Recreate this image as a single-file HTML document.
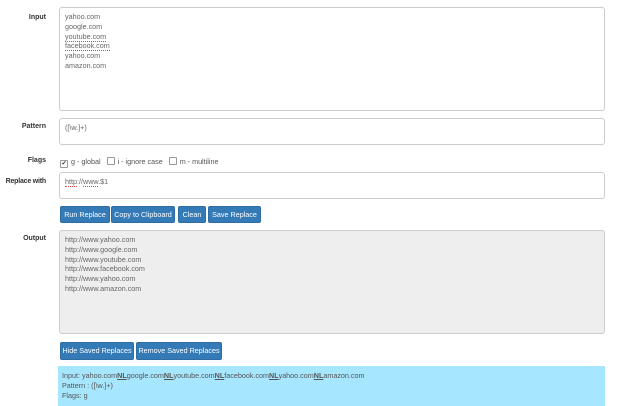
<!DOCTYPE html>
<html><head><style>
body{margin:0;width:640px;height:400px;overflow:hidden;background:#fff;font-family:"Liberation Sans",sans-serif;font-size:7px;color:#555;position:relative}
.lbl{position:absolute;right:594px;font-weight:bold;color:#333;font-size:7px}
.ta{position:absolute;left:59px;width:546px;border:1px solid #ccc;border-radius:3px;box-sizing:border-box;padding:4px 5px;line-height:9.8px;color:#666;font-size:7.2px}
.btn{position:absolute;height:17px;background:#337ab7;border:1px solid #2e6da4;border-radius:2px;color:#fff;box-sizing:border-box;line-height:15px;text-align:center;font-size:7.2px}
.u{border-bottom:1px dotted #d44}
.cb{display:inline-block;width:6px;height:6px;border:1px solid #999;border-radius:1px;vertical-align:-1px;margin-right:3px;background:#fff;font-size:6px;line-height:6px;text-align:center;color:#333}
</style></head><body>
<div class="lbl" style="top:14px">Input</div>
<div class="ta" style="top:7px;height:104px">yahoo.com<br>google.com<br><span class="u">youtube.com</span><br><span class="u">facebook.com</span><br>yahoo.com<br>amazon.com</div>
<div class="lbl" style="top:123px">Pattern</div>
<div class="ta" style="top:118px;height:27px">([\w.]+)</div>
<div class="lbl" style="top:157px">Flags</div>
<div style="position:absolute;left:60px;top:157px;color:#555;font-size:7.2px"><span class="cb">✔</span>g - global &nbsp;&nbsp;<span class="cb"></span>i - ignore case &nbsp;&nbsp;<span class="cb"></span>m - multiline</div>
<div class="lbl" style="top:178px;letter-spacing:-0.2px">Replace with</div>
<div class="ta" style="top:172px;height:27px"><span class="u">http</span>://<span class="u">www</span>.$1</div>
<div class="btn" style="left:60px;top:206px;width:50px">Run Replace</div>
<div class="btn" style="left:111px;top:206px;width:64px">Copy to Clipboard</div>
<div class="btn" style="left:178px;top:206px;width:28px">Clean</div>
<div class="btn" style="left:208px;top:206px;width:53px">Save Replace</div>
<div class="lbl" style="top:235px">Output</div>
<div class="ta" style="top:230px;height:104px;background:#eee">http://www.yahoo.com<br>http://www.google.com<br>http://www.youtube.com<br>http://www.facebook.com<br>http://www.yahoo.com<br>http://www.amazon.com</div>
<div class="btn" style="left:60px;top:342px;width:74px;height:18px">Hide Saved Replaces</div>
<div class="btn" style="left:136px;top:342px;width:86px;height:18px">Remove Saved Replaces</div>
<div style="position:absolute;left:58px;top:366px;width:547px;height:40px;background:#a6e6ff;padding:5px 4px;box-sizing:border-box;line-height:9.8px;color:#555;font-size:7.2px">Input: yahoo.com<b><u>NL</u></b>google.com<b><u>NL</u></b>youtube.com<b><u>NL</u></b>facebook.com<b><u>NL</u></b>yahoo.com<b><u>NL</u></b>amazon.com<br>Pattern : ([\w.]+)<br>Flags: g</div>
</body></html>
